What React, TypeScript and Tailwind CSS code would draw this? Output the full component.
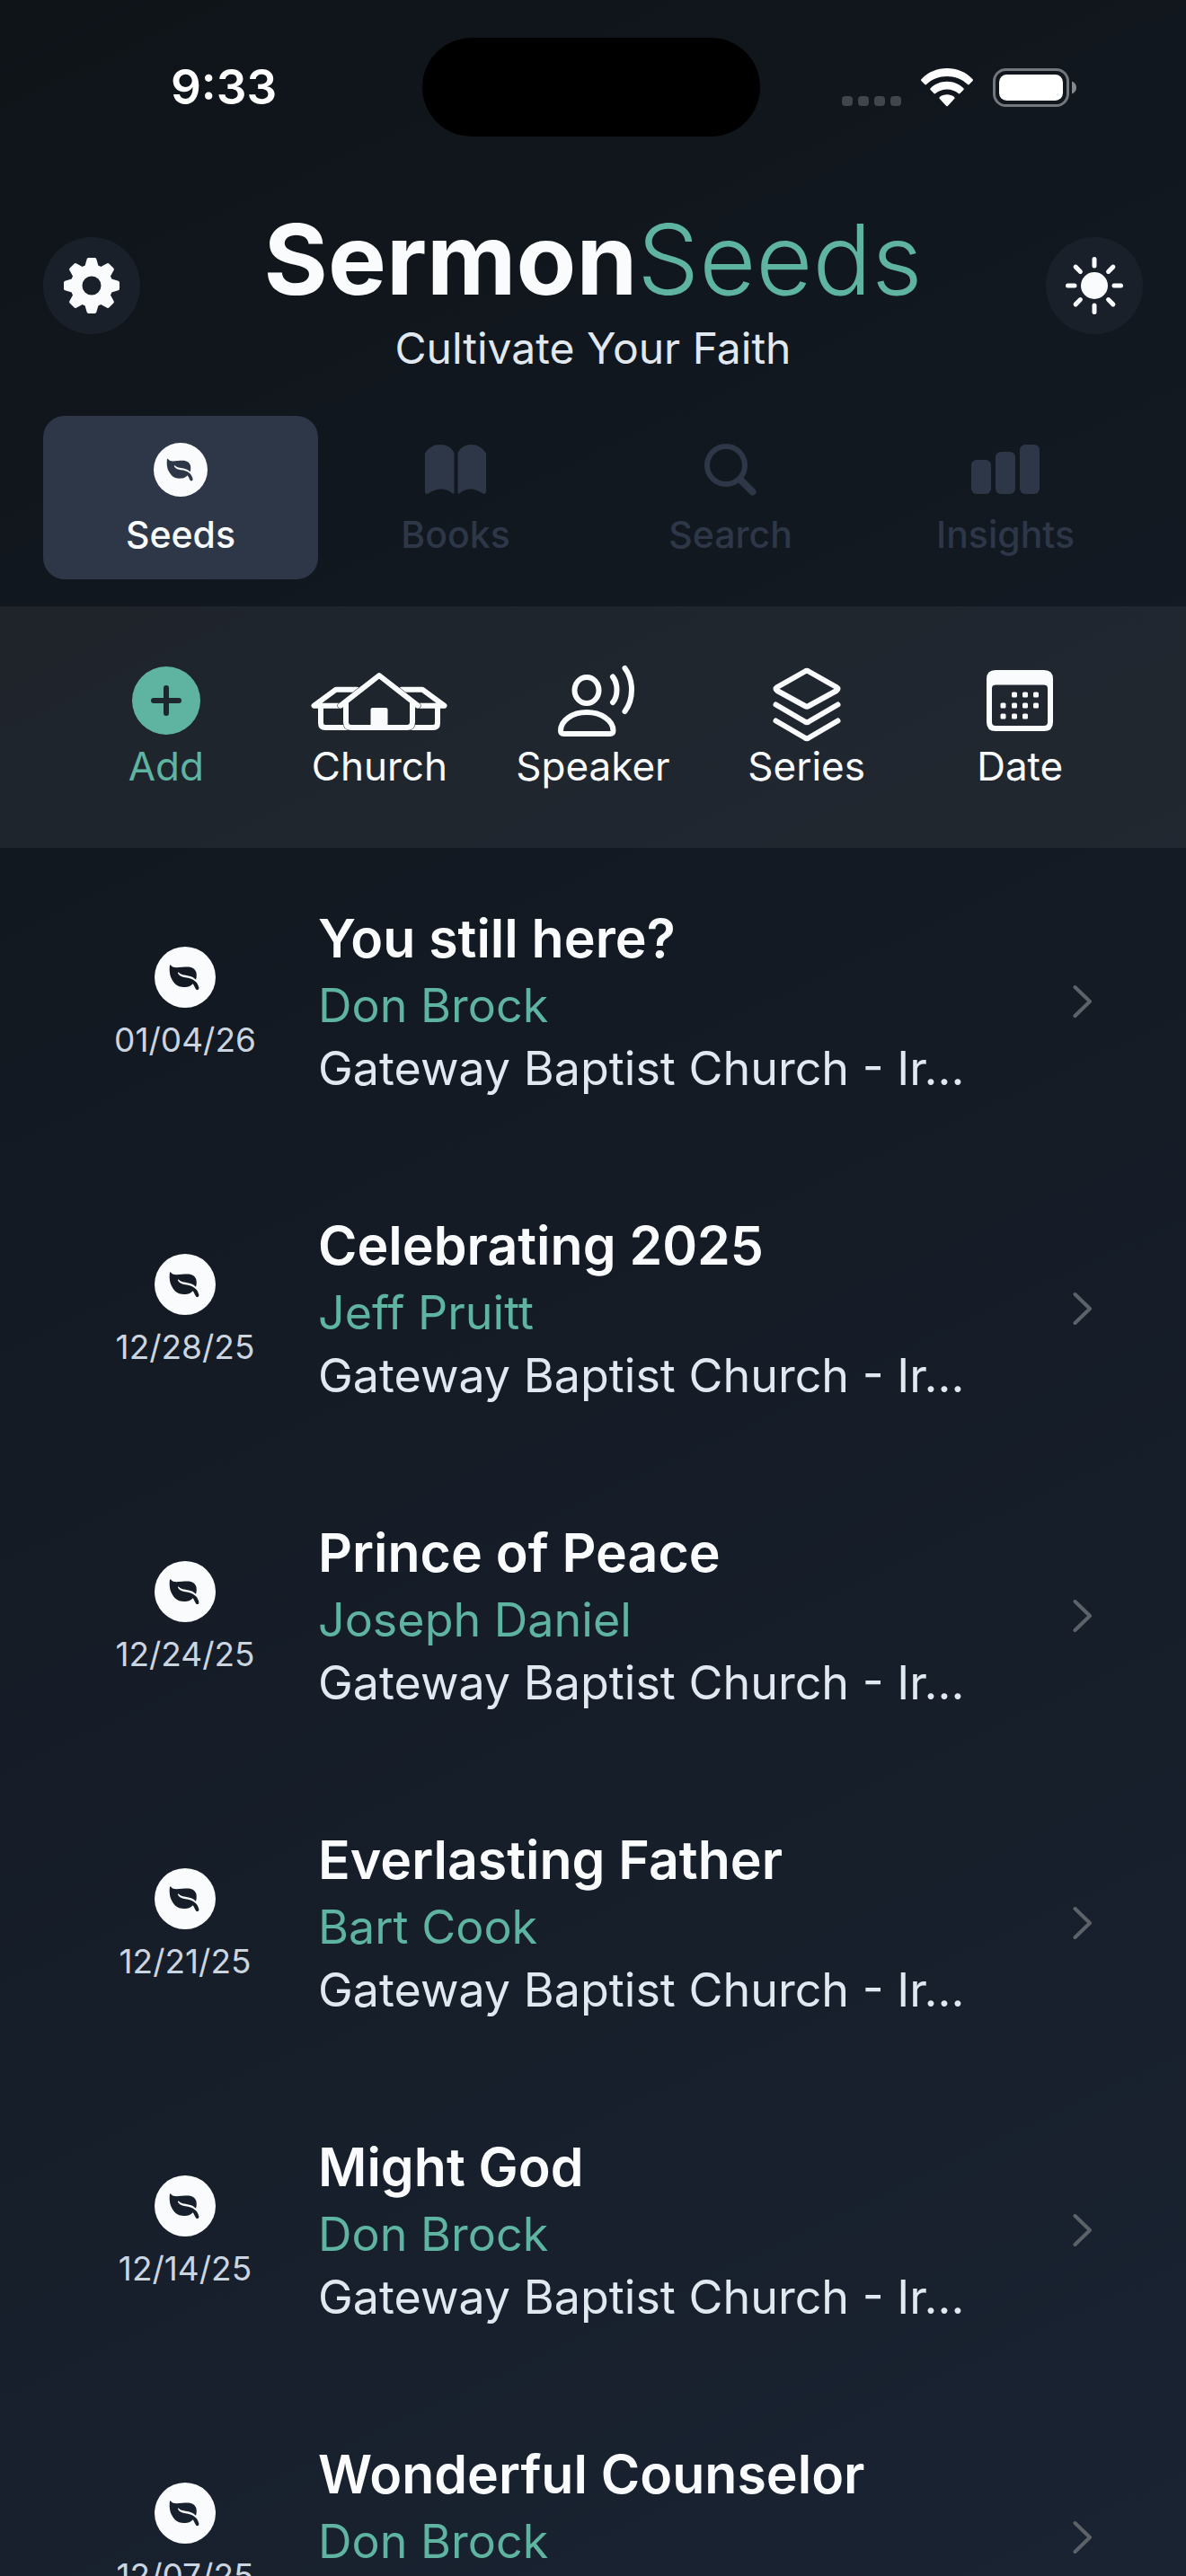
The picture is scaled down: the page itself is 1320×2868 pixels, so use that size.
import { useState } from 'react'
import type { ReactNode } from 'react'

interface Sermon {
  date: string
  title: string
  speaker: string
  church: string
}

const SERMONS: Sermon[] = [
  { date: '01/04/26', title: 'You still here?', speaker: 'Don Brock', church: 'Gateway Baptist Church - Ir…' },
  { date: '12/28/25', title: 'Celebrating 2025', speaker: 'Jeff Pruitt', church: 'Gateway Baptist Church - Ir…' },
  { date: '12/24/25', title: 'Prince of Peace', speaker: 'Joseph Daniel', church: 'Gateway Baptist Church - Ir…' },
  { date: '12/21/25', title: 'Everlasting Father', speaker: 'Bart Cook', church: 'Gateway Baptist Church - Ir…' },
  { date: '12/14/25', title: 'Might God', speaker: 'Don Brock', church: 'Gateway Baptist Church - Ir…' },
  { date: '12/07/25', title: 'Wonderful Counselor', speaker: 'Don Brock', church: 'Gateway Baptist Church - Ir…' },
]

function LeafIcon({ className }: { className: string }) {
  return (
    <svg viewBox="0 0 68 68" className={className} aria-hidden>
      <defs>
        <mask id="leaf-cut">
          <rect width="68" height="68" fill="#fff" />
          <path
            d="M17.6 20.2C16.9 20 16.7 22 16.7 26C16.9 30 17.4 33 19 35.7C21 40 24 43 27.5 44.3C31 45.4 36 45.2 39 44C41 43.2 42 41.8 42.5 41.2C43.8 42.4 44.6 44.6 45.6 46.6C46.2 48 47.2 48.4 48.2 48C49.3 47.6 49.6 46.6 49.2 45C48.6 42.8 47.6 41 46.6 39.8C44 37 41 35.6 37.3 34.7C33 34 30 33.8 28 32C26.6 30.6 25.8 29.6 26 28.8C26.4 28.2 27.2 29 28.4 29.9C32 32 37 31.6 40.7 33.2C43.4 34.2 45 35.6 46 36.7C46.8 35 47 31.4 46.4 28.6C45.6 25.8 43.4 23.6 40.4 22.9C37 22.2 34 22.6 30.7 22.8C26.8 23.1 23.4 23.6 20.9 22.8C19.4 22.2 18.4 20.6 17.6 20.2Z"
            fill="#000"
          />
        </mask>
      </defs>
      <circle cx="34" cy="34" r="34" fill="currentColor" mask="url(#leaf-cut)" />
    </svg>
  )
}

function GearIcon() {
  return (
    <svg viewBox="0 0 62 62" className="size-[62px]" fill="currentColor" stroke="currentColor" aria-hidden>
      <circle cx="31" cy="31" r="17" fill="none" strokeWidth="13" />
      {[0, 45, 90, 135, 180, 225, 270, 315].map((a) => (
        <path
          key={a}
          d="M27.6 2 H34.4 L37 11 H25Z"
          strokeWidth="4"
          strokeLinejoin="round"
          transform={`rotate(${a} 31 31)`}
        />
      ))}
    </svg>
  )
}

function SunIcon() {
  return (
    <svg viewBox="0 0 64 64" className="size-16" fill="currentColor" stroke="currentColor" aria-hidden>
      <circle cx="32" cy="32" r="15" stroke="none" />
      {[0, 45, 90, 135, 180, 225, 270, 315].map((a) => (
        <path key={a} d="M32 2.5V10" strokeWidth="5" strokeLinecap="round" transform={`rotate(${a} 32 32)`} />
      ))}
    </svg>
  )
}

function BookIcon() {
  return (
    <svg viewBox="0 0 70 60" className="h-[60px] w-[70px]" fill="currentColor" aria-hidden>
      <path d="M1 12C5 5 11 2 18 2S30 5 33.500 11V55.500C33.500 56.800 31.800 57 31 56C27 52.500 23 51.500 19 51.500S10 53 5.500 56C3.500 57.500 1 57 1 54Z" />
      <path d="M69 12C65 5 59 2 52.500 2S41 5 37.500 11V55.500C37.500 56.800 39.200 57 40 56C44 52.500 48 51.500 52 51.500S60 53 64.500 56C66.500 57.500 69 57 69 54Z" />
    </svg>
  )
}

function SearchIcon() {
  return (
    <svg viewBox="0 0 60 60" className="size-[60px]" fill="none" stroke="currentColor" aria-hidden>
      <circle cx="25" cy="25" r="21" strokeWidth="6" />
      <path d="M41 41L54.500 54.500" strokeWidth="8" strokeLinecap="round" />
    </svg>
  )
}

function InsightsIcon() {
  return (
    <svg viewBox="0 0 76 60" className="h-[60px] w-[76px]" fill="currentColor" aria-hidden>
      <rect x="0" y="19" width="22" height="38" rx="6" />
      <rect x="27" y="10" width="22" height="47" rx="6" />
      <rect x="54" y="2" width="22" height="55" rx="6" />
    </svg>
  )
}

const TABS: { label: string; icon: ReactNode }[] = [
  { label: 'Seeds', icon: <LeafIcon className="size-[60px]" /> },
  { label: 'Books', icon: <BookIcon /> },
  { label: 'Search', icon: <SearchIcon /> },
  { label: 'Insights', icon: <InsightsIcon /> },
]

const FILTERS: { label: string; accent?: boolean; icon: ReactNode }[] = [
  {
    label: 'Add',
    accent: true,
    icon: (
      <>
        <circle cx="80" cy="41" r="38" fill="currentColor" stroke="none" />
        <path d="M80 27V55M66 41H94" stroke="#1f272e" />
      </>
    ),
  },
  {
    label: 'Church',
    icon: (
      <>
        <path d="M55 28.700H32L7.500 46.700H38M15 47V66Q15 71 20 71H46" />
        <path d="M105 28.700H128L152.500 46.700H122M145 47V66Q145 71 140 71H114" />
        <path d="M37 46.700L80 13L123 46.700M43 43V65Q43 71 49 71H111Q117 71 117 65V43" stroke="#1f272e" strokeWidth="7" />
        <path d="M37 46.700L80 13L123 46.700M43 43V65Q43 71 49 71H111Q117 71 117 65V43" />
        <rect x="70.500" y="49" width="19" height="24" rx="2" fill="currentColor" stroke="none" />
      </>
    ),
  },
  {
    label: 'Speaker',
    icon: (
      <>
        <ellipse cx="73" cy="29.500" rx="13.500" ry="14.500" />
        <path d="M44 74.500C44 63 57 54 73 54S102.500 63 102.500 74.500Q102.500 78 99 78H47.500Q44 78 44 74.500Z" />
        <path d="M102 14.500Q106.500 20 106.500 29T102 43" />
        <path d="M115.500 5Q123 15 123 29T115.500 53" />
      </>
    ),
  },
  {
    label: 'Series',
    icon: (
      <>
        <path d="M78 8.500Q80 7.200 82 8.500L113 26Q116 28 113 30L82 47Q80 48.300 78 47L47 30Q44 28 47 26Z" />
        <path d="M45.500 45.500L78 64.500Q80 66 82 64.500L114.500 45.500" />
        <path d="M45.500 63.500L78 82.500Q80 84 82 82.500L114.500 63.500" />
      </>
    ),
  },
  {
    label: 'Date',
    icon: (
      <>
        <path
          d="M53 7H107Q117 7 117 17V65Q117 75 107 75H53Q43 75 43 65V17Q43 7 53 7ZM53 23.500Q49 23.500 49 27.500V65Q49 69 53 69H107Q111 69 111 65V27.500Q111 23.500 107 23.500Z"
          fill="currentColor"
          fillRule="evenodd"
          stroke="none"
        />
        {[
          [74, 34.5], [86, 34.5], [98, 34.5],
          [61.5, 46.5], [74, 46.5], [86, 46.5], [98, 46.5],
          [61.5, 58.5], [74, 58.5], [86, 58.5],
        ].map(([x, y]) => (
          <rect key={`${x}-${y}`} x={x - 3} y={y - 3} width="6" height="6" rx="1.5" fill="currentColor" stroke="none" />
        ))}
      </>
    ),
  },
]

function StatusBar() {
  return (
    <div className="flex items-center pt-[42px] text-white">
      <div className="flex-1 pl-7 text-center text-[53px] leading-[60px] font-semibold">9:33</div>
      <div className="h-[110px] w-[376px] rounded-full bg-black" />
      <div className="flex flex-1 items-end justify-center gap-[22px] pr-8">
        <svg viewBox="0 0 66 43" className="h-[43px] w-[66px]" fill="#41464b" aria-hidden>
          {[0, 18, 36, 54].map((x) => (
            <rect key={x} x={x} y="31" width="12" height="11" rx="4" />
          ))}
        </svg>
        <svg viewBox="0 0 58 43" className="h-[43px] w-[58px]" fill="currentColor" aria-hidden>
          <path d="M29 0C40 0 50.500 4.300 57.600 12.200Q58.400 13.100 57.600 14L53.700 18Q52.800 18.800 52 18C45.800 12 37.500 9 29 9S12.200 12 6 18Q5.200 18.800 4.300 18L.4 14Q-.4 13.100.4 12.200C7.500 4.300 18 0 29 0Z" />
          <path d="M29 14.800C36 14.800 42.500 17.500 47.400 22.200Q48.300 23 47.400 24L43.500 28Q42.600 28.800 41.700 28C38.200 25 33.700 23.500 29 23.500S19.800 25 16.300 28Q15.400 28.800 14.500 28L10.600 24Q9.700 23 10.600 22.200C15.500 17.500 22 14.800 29 14.800Z" />
          <path d="M29 29.300C32 29.300 35 30.300 37.200 32.100Q38 33 37.200 34L30 41.700Q29 42.700 28 41.700L20.800 34Q20 33 20.800 32.100C23 30.300 26 29.300 29 29.300Z" />
        </svg>
        <svg viewBox="0 0 93 43" className="h-[43px] w-[93px]" aria-hidden>
          <rect x="1.500" y="1.500" width="82" height="40" rx="13" fill="none" stroke="#73777c" strokeWidth="3" />
          <rect x="7" y="7" width="71" height="29" rx="8.500" fill="#fff" />
          <path d="M88 14.500C91.500 16 93 18.500 93 21.500S91.500 27 88 28.500Z" fill="#85888c" />
        </svg>
      </div>
    </div>
  )
}

function RoundButton({ label, children }: { label: string; children: ReactNode }) {
  return (
    <button
      type="button"
      aria-label={label}
      className="flex size-[108px] items-center justify-center rounded-full bg-[#1a202a]"
    >
      {children}
    </button>
  )
}

function SermonRow({ sermon }: { sermon: Sermon }) {
  return (
    <li>
      <a href="#" className="flex h-[342px] items-center pr-[104px] pl-[116px]">
        <div className="flex w-[180px] shrink-0 flex-col items-center gap-3 pt-1.5">
          <LeafIcon className="size-[68px]" />
          <span className="text-[37px] leading-[48px] text-[#cbd5e0]">{sermon.date}</span>
        </div>
        <div className="ml-[58px] min-w-0 flex-1">
          <h2 className="truncate text-[59px] leading-[80px] font-semibold">{sermon.title}</h2>
          <p className="truncate text-[52px] leading-[70px] text-[#5fb3a1]">{sermon.speaker}</p>
          <p className="truncate text-[52px] leading-[70px] text-[#e2e8f0]">{sermon.church}</p>
        </div>
        <svg
          viewBox="0 0 22 38"
          className="h-[38px] w-[22px] shrink-0"
          fill="none"
          stroke="#5d6269"
          strokeWidth="4"
          strokeLinecap="round"
          strokeLinejoin="round"
          aria-hidden
        >
          <path d="M2.500 3L19 19L2.500 35" />
        </svg>
      </a>
    </li>
  )
}

export default function App() {
  const [tab, setTab] = useState('Seeds')

  return (
    <div className="h-screen overflow-hidden bg-linear-[155deg] from-[#0f1419] to-[#1a2332] font-['Inter',sans-serif] text-[#fafbfd]">
      <StatusBar />

      <header className="flex items-center justify-between px-12 pt-[70px] pb-[49px]">
        <RoundButton label="Settings">
          <GearIcon />
        </RoundButton>
        <div className="flex flex-col gap-2 text-center">
          <h1 className="text-[109px] leading-[132px] font-bold">
            Sermon<span className="font-light text-[#5fb3a1]">Seeds</span>
          </h1>
          <p className="text-[48px] leading-[52px] text-[#e2e8f0]">Cultivate Your Faith</p>
        </div>
        <RoundButton label="Light mode">
          <SunIcon />
        </RoundButton>
      </header>

      <nav className="grid grid-cols-4 px-12 pb-[30px]">
        {TABS.map(({ label, icon }) => (
          <button
            key={label}
            type="button"
            onClick={() => setTab(label)}
            className={`flex h-[182px] flex-col items-center justify-center gap-[18px] rounded-3xl pt-1 text-[41px] leading-[48px] font-medium ${
              tab === label ? 'bg-[#2d3748]' : 'text-[#2d3748]'
            }`}
          >
            {icon}
            {label}
          </button>
        ))}
      </nav>

      <div className="grid grid-cols-5 bg-white/6 px-[66px] py-16">
        {FILTERS.map(({ label, accent, icon }) => (
          <button
            key={label}
            type="button"
            className={`flex flex-col items-center gap-[3px] text-[44px] leading-[54px] ${accent ? 'text-[#5fb3a1]' : ''}`}
          >
            <svg
              viewBox="0 0 160 84"
              className="h-[84px] w-40 overflow-visible"
              fill="none"
              stroke="currentColor"
              strokeWidth="6"
              strokeLinecap="round"
              strokeLinejoin="round"
              aria-hidden
            >
              {icon}
            </svg>
            {label}
          </button>
        ))}
      </div>

      <ul>
        {SERMONS.map((sermon) => (
          <SermonRow key={sermon.date} sermon={sermon} />
        ))}
      </ul>
    </div>
  )
}
